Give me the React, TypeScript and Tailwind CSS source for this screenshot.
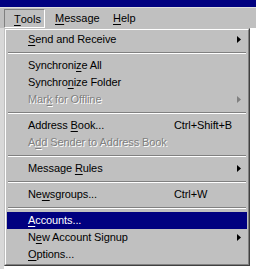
const font = { fontFamily: '"Liberation Sans", Arial, sans-serif' };

type Item =
  | { sep: true }
  | {
      sep?: false;
      pre: string;
      key: string;
      post: string;
      shortcut?: string;
      sub?: boolean;
      disabled?: boolean;
      active?: boolean;
    };

const items: Item[] = [
  { pre: '', key: 'S', post: 'end and Receive', sub: true },
  { sep: true },
  { pre: 'Synchroni', key: 'z', post: 'e All' },
  { pre: 'Synchro', key: 'n', post: 'ize Folder' },
  { pre: 'Mar', key: 'k', post: ' for Offline', sub: true, disabled: true },
  { sep: true },
  { pre: 'Address ', key: 'B', post: 'ook...', shortcut: 'Ctrl+Shift+B' },
  { pre: 'A', key: 'd', post: 'd Sender to Address Book', disabled: true },
  { sep: true },
  { pre: 'Message ', key: 'R', post: 'ules', sub: true },
  { sep: true },
  { pre: 'Ne', key: 'w', post: 'sgroups...', shortcut: 'Ctrl+W' },
  { sep: true },
  { pre: '', key: 'A', post: 'ccounts...', active: true },
  { pre: 'N', key: 'e', post: 'w Account Signup', sub: true },
  { pre: '', key: 'O', post: 'ptions...' },
];

const Arrow = ({ color }: { color: string }) => (
  <svg width="4" height="7" viewBox="0 0 4 7" className="block">
    <path d="M0 0 L4 3.5 L0 7 Z" fill={color} />
  </svg>
);

const Row = ({ item }: { item: Exclude<Item, { sep: true }> }) => {
  const tone = item.active
    ? 'bg-[#000080] text-white'
    : item.disabled
      ? 'text-[#808080] [text-shadow:1px_1px_0_#ffffff]'
      : 'text-black';
  return (
    <div className={`flex h-[17px] items-center ${tone}`}>
      <span className="w-[167px] shrink-0 pl-[21px] whitespace-nowrap tracking-[-0.1px]">
        {item.pre}
        <u className="underline-offset-[2px]">{item.key}</u>
        {item.post}
      </span>
      {item.shortcut && <span className="whitespace-nowrap tracking-[-0.1px]">{item.shortcut}</span>}
      {item.sub && (
        <span className="ml-auto mr-[6px]">
          <Arrow color={item.active ? '#ffffff' : item.disabled ? '#808080' : '#000000'} />
        </span>
      )}
    </div>
  );
};

const Separator = () => (
  <div className="flex h-[9px] flex-col justify-center px-[1px]">
    <div className="h-[1px] bg-[#808080]" />
    <div className="h-[1px] bg-white" />
  </div>
);

export default function App() {
  return (
    <div className="h-[269px] w-[256px] overflow-hidden bg-white text-[11px]" style={font}>
      <div className="h-[7px] bg-[#000080]" />
      <div className="h-[1px] bg-[#dfdfdf]" />
      <div className="flex h-[20px] items-start bg-[#c0c0c0] pt-[1px] text-black">
        <div className="ml-[4px] flex h-[19px] w-[41px] items-center border border-b-white border-l-[#808080] border-r-white border-t-[#808080] pl-[9px] pt-[1px]">
          <u className="underline-offset-[2px]">T</u>ools
        </div>
        <div className="ml-[10px] flex h-[19px] w-[58px] items-center">
          <span>
            <u className="underline-offset-[2px]">M</u>essage
          </span>
        </div>
        <div className="flex h-[19px] items-center">
          <span>
            <u className="underline-offset-[2px]">H</u>elp
          </span>
        </div>
      </div>
      <div className="flex">
        <div className="h-[241px] w-[4px] bg-[#d8d8d8]" />
        <div className="w-[246px] self-start border border-b-[#404040] border-l-[#c0c0c0] border-r-[#404040] border-t-[#c0c0c0]">
          <div className="border border-b-[#808080] border-l-white border-r-[#808080] border-t-white bg-[#c0c0c0] p-[1px]">
            {items.map((item, i) => (item.sep ? <Separator key={i} /> : <Row key={i} item={item} />))}
          </div>
        </div>
      </div>
    </div>
  );
}
